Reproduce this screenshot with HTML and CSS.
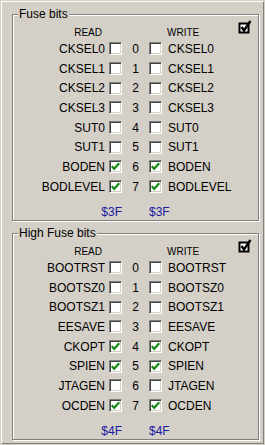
FILE: index.html
```html
<!DOCTYPE html>
<html lang="en">
<head>
  <meta charset="UTF-8">
  <meta name="viewport" content="width=device-width, initial-scale=1.0">
  <title>Fuse bits</title>
  <link rel="stylesheet" href="styles.css">
</head>
<body>

  <div class="frame">

    <!-- Low fuse byte -->
    <div class="group">
      <div class="group-title">Fuse bits</div>
      <div class="fuse-grid">
        <span class="col-head read-head">READ</span>
        <span class="col-head write-head">WRITE</span>
        <span class="all-icon">
          <svg width="14" height="14" viewBox="0 0 14 14"><rect x="1.5" y="3.5" width="9" height="9" fill="#fff" stroke="#000" stroke-width="2"/><path d="M3.5 7 L6 10.5 L12.5 1" fill="none" stroke="#000" stroke-width="2.4"/></svg>
        </span>

        <span class="name">CKSEL0</span><span class="cb"></span><span class="num">0</span><span class="cb"></span><span class="wname">CKSEL0</span>
        <span class="name">CKSEL1</span><span class="cb"></span><span class="num">1</span><span class="cb"></span><span class="wname">CKSEL1</span>
        <span class="name">CKSEL2</span><span class="cb"></span><span class="num">2</span><span class="cb"></span><span class="wname">CKSEL2</span>
        <span class="name">CKSEL3</span><span class="cb"></span><span class="num">3</span><span class="cb"></span><span class="wname">CKSEL3</span>
        <span class="name">SUT0</span><span class="cb"></span><span class="num">4</span><span class="cb"></span><span class="wname">SUT0</span>
        <span class="name">SUT1</span><span class="cb"></span><span class="num">5</span><span class="cb"></span><span class="wname">SUT1</span>
        <span class="name">BODEN</span><span class="cb checked"></span><span class="num">6</span><span class="cb checked"></span><span class="wname">BODEN</span>
        <span class="name">BODLEVEL</span><span class="cb checked"></span><span class="num">7</span><span class="cb checked"></span><span class="wname">BODLEVEL</span>

        <span class="hex read-hex">$3F</span>
        <span class="hex write-hex">$3F</span>
      </div>
    </div>

    <!-- High fuse byte -->
    <div class="group">
      <div class="group-title">High Fuse bits</div>
      <div class="fuse-grid">
        <span class="col-head read-head">READ</span>
        <span class="col-head write-head">WRITE</span>
        <span class="all-icon">
          <svg width="14" height="14" viewBox="0 0 14 14"><rect x="1.5" y="3.5" width="9" height="9" fill="#fff" stroke="#000" stroke-width="2"/><path d="M3.5 7 L6 10.5 L12.5 1" fill="none" stroke="#000" stroke-width="2.4"/></svg>
        </span>

        <span class="name">BOOTRST</span><span class="cb"></span><span class="num">0</span><span class="cb"></span><span class="wname">BOOTRST</span>
        <span class="name">BOOTSZ0</span><span class="cb"></span><span class="num">1</span><span class="cb"></span><span class="wname">BOOTSZ0</span>
        <span class="name">BOOTSZ1</span><span class="cb"></span><span class="num">2</span><span class="cb"></span><span class="wname">BOOTSZ1</span>
        <span class="name">EESAVE</span><span class="cb"></span><span class="num">3</span><span class="cb"></span><span class="wname">EESAVE</span>
        <span class="name">CKOPT</span><span class="cb checked"></span><span class="num">4</span><span class="cb checked"></span><span class="wname">CKOPT</span>
        <span class="name">SPIEN</span><span class="cb checked"></span><span class="num">5</span><span class="cb checked"></span><span class="wname">SPIEN</span>
        <span class="name">JTAGEN</span><span class="cb"></span><span class="num">6</span><span class="cb"></span><span class="wname">JTAGEN</span>
        <span class="name">OCDEN</span><span class="cb checked"></span><span class="num">7</span><span class="cb checked"></span><span class="wname">OCDEN</span>

        <span class="hex read-hex">$4F</span>
        <span class="hex write-hex">$4F</span>
      </div>
    </div>

  </div>

</body>
</html>
```

FILE: styles.css
```css
* {
  margin: 0;
  padding: 0;
  box-sizing: border-box;
}

body {
  font-family: "Liberation Sans", Arial, sans-serif;
  font-size: 12px;
  color: #000;
  background-color: #d4d0c8;
  width: 265px;
  height: 445px;
  overflow: hidden;
}

.frame {
  margin: 1px;
  height: 443px;
  border: 1px solid;
  border-color: #fff #808080 #808080 #fff;
  padding-top: 12px;
}

.group {
  height: 207px;
  margin: 0 4px 12px 10px;
  border: 1px solid #808080;
  box-shadow: inset 1px 1px 0 #fff, 1px 1px 0 #fff;
}

.group-title {
  display: table;
  margin: -8px 0 0 5px;
  padding: 0 1px;
  line-height: 14px;
  background-color: #d4d0c8;
}

.fuse-grid {
  display: grid;
  grid-template-columns: 96px 13px 27px 13px 1fr auto;
  grid-template-rows: 12px repeat(8, 19.7px) 23px;
  align-items: center;
  margin-top: 6px;
}

.col-head {
  font-size: 10px;
  line-height: 12px;
}

.read-head {
  grid-column: 1;
  text-align: right;
  padding-right: 7px;
}

.write-head {
  grid-column: 5;
  padding-left: 5px;
}

.all-icon {
  grid-column: 6;
  align-self: start;
  margin: -7px 6px 0 0;
  height: 14px;
}

.all-icon svg {
  display: block;
}

.name {
  grid-column: 1;
  text-align: right;
  padding-right: 4px;
}

.num {
  text-align: center;
}

.wname {
  grid-column: 5 / span 2;
  padding-left: 6px;
}

.cb {
  width: 13px;
  height: 13px;
  background-color: #fff;
  border: 1px solid;
  border-color: #808080 #fff #fff #808080;
  box-shadow: inset 1px 1px 0 #404040, inset -1px -1px 0 #d4d0c8;
}

.cb.checked {
  background-image: url("data:image/svg+xml,%3Csvg xmlns='http://www.w3.org/2000/svg' width='11' height='11' viewBox='0 0 11 11'%3E%3Cpath d='M1.8 5.2 L4.2 7.8 L9.2 2.2' fill='none' stroke='%23178a17' stroke-width='2.2'/%3E%3C/svg%3E");
  background-repeat: no-repeat;
  background-position: center;
}

.hex {
  color: #1a1aa0;
  align-self: end;
  line-height: 16px;
}

.read-hex {
  grid-column: 1 / span 2;
  text-align: right;
}

.write-hex {
  grid-column: 4 / span 2;
}
```
